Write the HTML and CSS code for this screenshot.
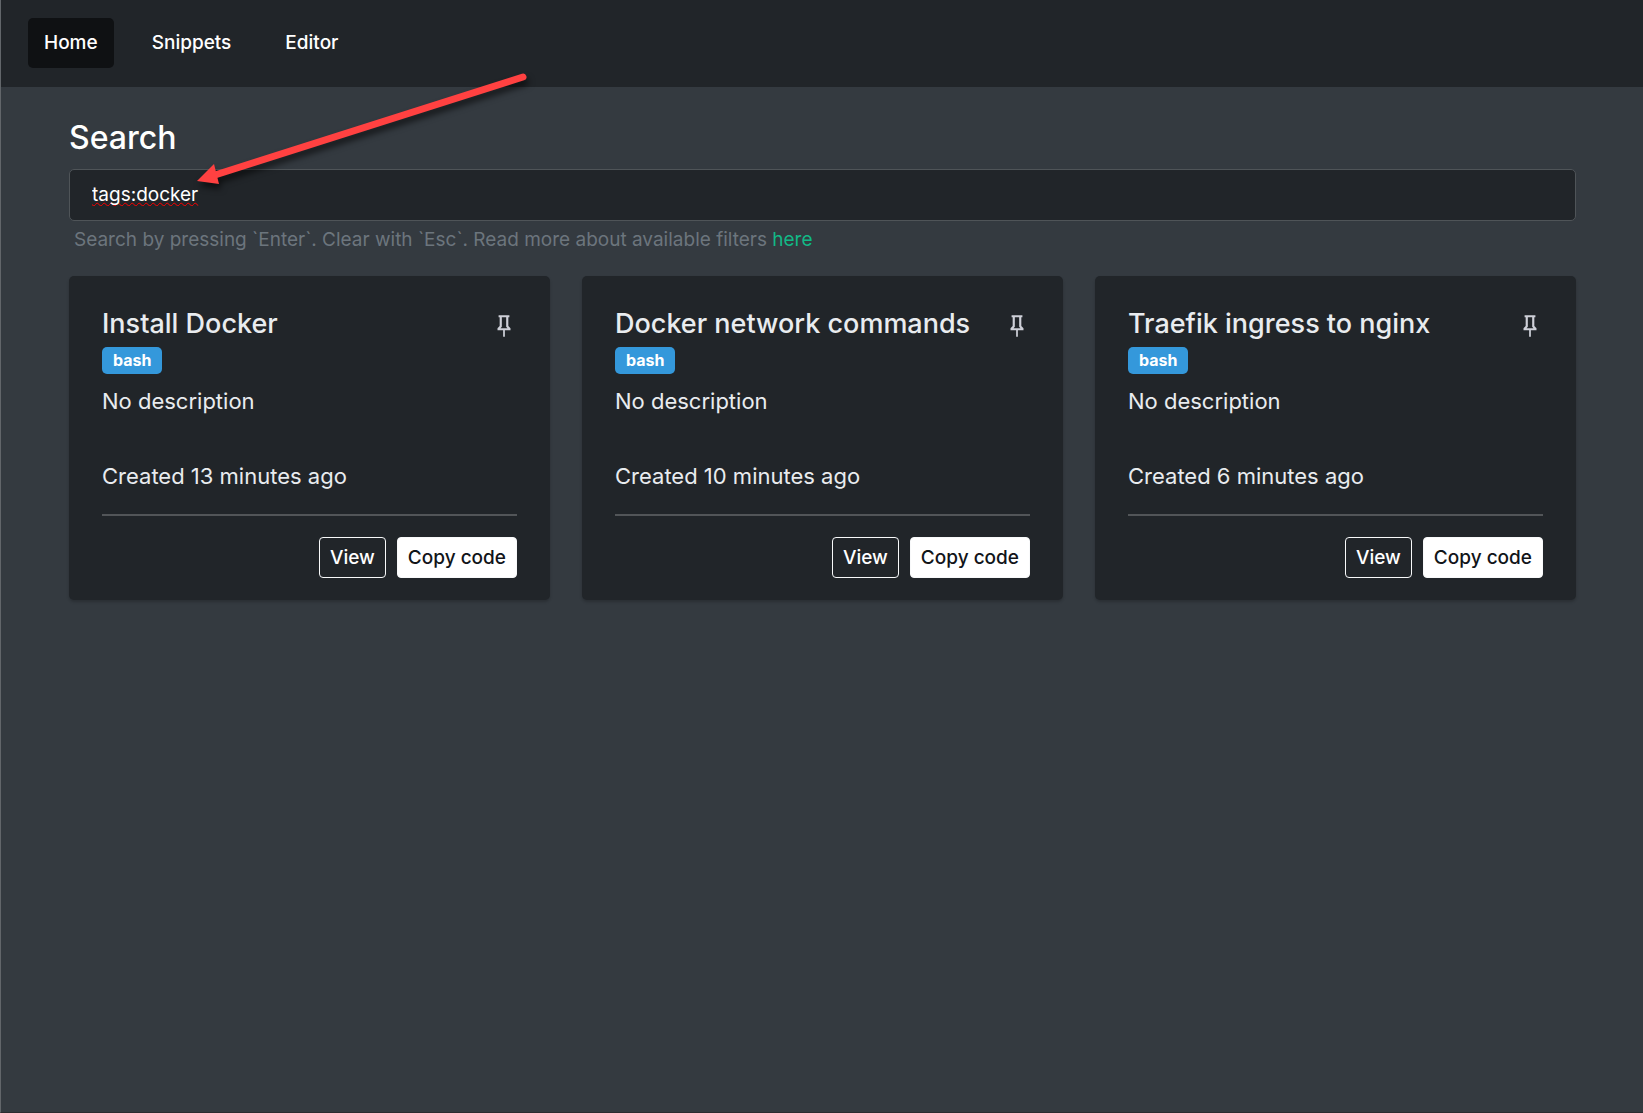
FILE: index.html
```html
<!DOCTYPE html>
<html lang="en">
<head>
  <meta charset="utf-8">
  <meta name="viewport" content="width=device-width, initial-scale=1">
  <title>Snippets</title>
  <link rel="stylesheet" href="styles.css">
</head>
<body class="page">
  <svg class="symbols" aria-hidden="true">
    <symbol id="pin" viewBox="0 0 24 24">
      <path d="M16,12V4H17V2H7V4H8V12L6,14V16H11.2V22H12.8V16H18V14L16,12M8.8,14L10,12.8V4H14V12.8L15.2,14H8.8Z"/>
    </symbol>
  </svg>

  <nav class="navbar">
    <a class="nav-link nav-link-active" href="#home">Home</a>
    <a class="nav-link" href="#snippets">Snippets</a>
    <a class="nav-link" href="#editor">Editor</a>
  </nav>

  <main class="content">
    <label class="search-label" for="search">Search</label>
    <input class="search-input" id="search" type="text" value="tags:docker" spellcheck="false">
    <p class="search-help">Search by pressing `Enter`. Clear with `Esc`. Read more about available filters <a class="help-link" href="#filters">here</a></p>

    <section class="cards">
      <article class="card">
        <header class="card-header">
          <h2 class="card-title">Install Docker</h2>
          <button class="pin-button" type="button" aria-label="Pin"><svg class="pin-icon"><use href="#pin"/></svg></button>
        </header>
        <span class="badge">bash</span>
        <p class="card-text">No description</p>
        <p class="card-text card-created">Created 13 minutes ago</p>
        <hr class="divider">
        <div class="actions">
          <button class="btn" type="button">View</button>
          <button class="btn btn-light" type="button">Copy code</button>
        </div>
      </article>

      <article class="card">
        <header class="card-header">
          <h2 class="card-title">Docker network commands</h2>
          <button class="pin-button" type="button" aria-label="Pin"><svg class="pin-icon"><use href="#pin"/></svg></button>
        </header>
        <span class="badge">bash</span>
        <p class="card-text">No description</p>
        <p class="card-text card-created">Created 10 minutes ago</p>
        <hr class="divider">
        <div class="actions">
          <button class="btn" type="button">View</button>
          <button class="btn btn-light" type="button">Copy code</button>
        </div>
      </article>

      <article class="card">
        <header class="card-header">
          <h2 class="card-title">Traefik ingress to nginx</h2>
          <button class="pin-button" type="button" aria-label="Pin"><svg class="pin-icon"><use href="#pin"/></svg></button>
        </header>
        <span class="badge">bash</span>
        <p class="card-text">No description</p>
        <p class="card-text card-created">Created 6 minutes ago</p>
        <hr class="divider">
        <div class="actions">
          <button class="btn" type="button">View</button>
          <button class="btn btn-light" type="button">Copy code</button>
        </div>
      </article>
    </section>
  </main>

  <svg class="arrow" viewBox="0 0 350 130" aria-hidden="true">
    <path d="M336 17 L28 115" fill="none" stroke="#ff4141" stroke-width="7" stroke-linecap="round"/>
    <path d="M10 121 L27 104 L32 124 Z" fill="#ff4141"/>
  </svg>
</body>
</html>
```
FILE: styles.css
```css
* {
  box-sizing: border-box;
}

.page {
  position: relative;
  min-height: 100vh;
  margin: 0;
  border-left: 1px solid #62666a;
  border-bottom: 1px solid #2b2b2f;
  background: #343a40;
  color: #e9ecef;
  font-family: Inter, "Liberation Sans", sans-serif;
}

.symbols {
  display: none;
}

.navbar {
  display: flex;
  gap: 22px;
  padding: 18px 27px 19px;
  background: #212529;
}

.nav-link {
  padding: 0 16px;
  border-radius: 5px;
  color: #fff;
  font-size: 19px;
  font-weight: 500;
  line-height: 50px;
  text-decoration: none;
}

.nav-link-active {
  background: #0f1113;
}

.content {
  padding: 31px 67px 40px 68px;
}

.search-label {
  display: block;
  color: #fff;
  font-size: 32px;
  font-weight: 500;
  line-height: 40px;
}

.search-input {
  display: block;
  width: 100%;
  height: 52px;
  margin-top: 11px;
  padding: 0 22px 2px;
  border: 1px solid #4f5458;
  border-radius: 5px;
  background: #212529;
  color: #fff;
  font: 400 19px/26px Inter, "Liberation Sans", sans-serif;
  text-decoration: underline wavy #ff0000 1px;
  text-decoration-skip-ink: none;
}

.search-help {
  margin: 6px 0 0;
  padding-left: 5px;
  color: #6c757d;
  font-size: 19px;
  line-height: 26px;
}

.help-link {
  color: #12b886;
  text-decoration: none;
}

.cards {
  display: grid;
  grid-template-columns: repeat(3, 1fr);
  gap: 32px;
  margin-top: 23px;
}

.card {
  padding: 31px 33px 22px;
  border-radius: 5px;
  background: #212529;
  box-shadow: 0 2px 3px rgba(0, 0, 0, 0.2);
}

.card-header {
  display: flex;
  align-items: flex-start;
  justify-content: space-between;
}

.card-title {
  margin: 0;
  font-size: 27px;
  font-weight: 500;
  line-height: 34px;
}

.pin-button {
  display: flex;
  padding: 6px 0 0;
  border: 0;
  background: none;
  color: #ced0d8;
}

.pin-icon {
  width: 26px;
  height: 26px;
  fill: currentColor;
}

.badge {
  display: block;
  width: fit-content;
  margin-top: 6px;
  padding: 0 11px;
  border-radius: 5px;
  background: #3498db;
  color: #fff;
  font-size: 16px;
  font-weight: 700;
  line-height: 27px;
}

.card-text {
  margin: 11px 0 0;
  font-size: 22px;
  line-height: 33px;
}

.card-created {
  margin-top: 42px;
}

.divider {
  height: 2px;
  margin: 21px 0;
  border: 0;
  background: #525558;
}

.actions {
  display: flex;
  justify-content: flex-end;
  gap: 11px;
}

.btn {
  height: 41px;
  padding: 0 10px;
  border: 1px solid #f8f9fa;
  border-radius: 4px;
  background: transparent;
  color: #fff;
  font: 500 19px/24px Inter, "Liberation Sans", sans-serif;
}

.btn-light {
  background: #fff;
  color: #111418;
}

.arrow {
  position: absolute;
  top: 60px;
  left: 186px;
  width: 350px;
  height: 130px;
  overflow: visible;
  filter: drop-shadow(2px 5px 3px rgba(0, 0, 0, 0.6));
  pointer-events: none;
}
```
